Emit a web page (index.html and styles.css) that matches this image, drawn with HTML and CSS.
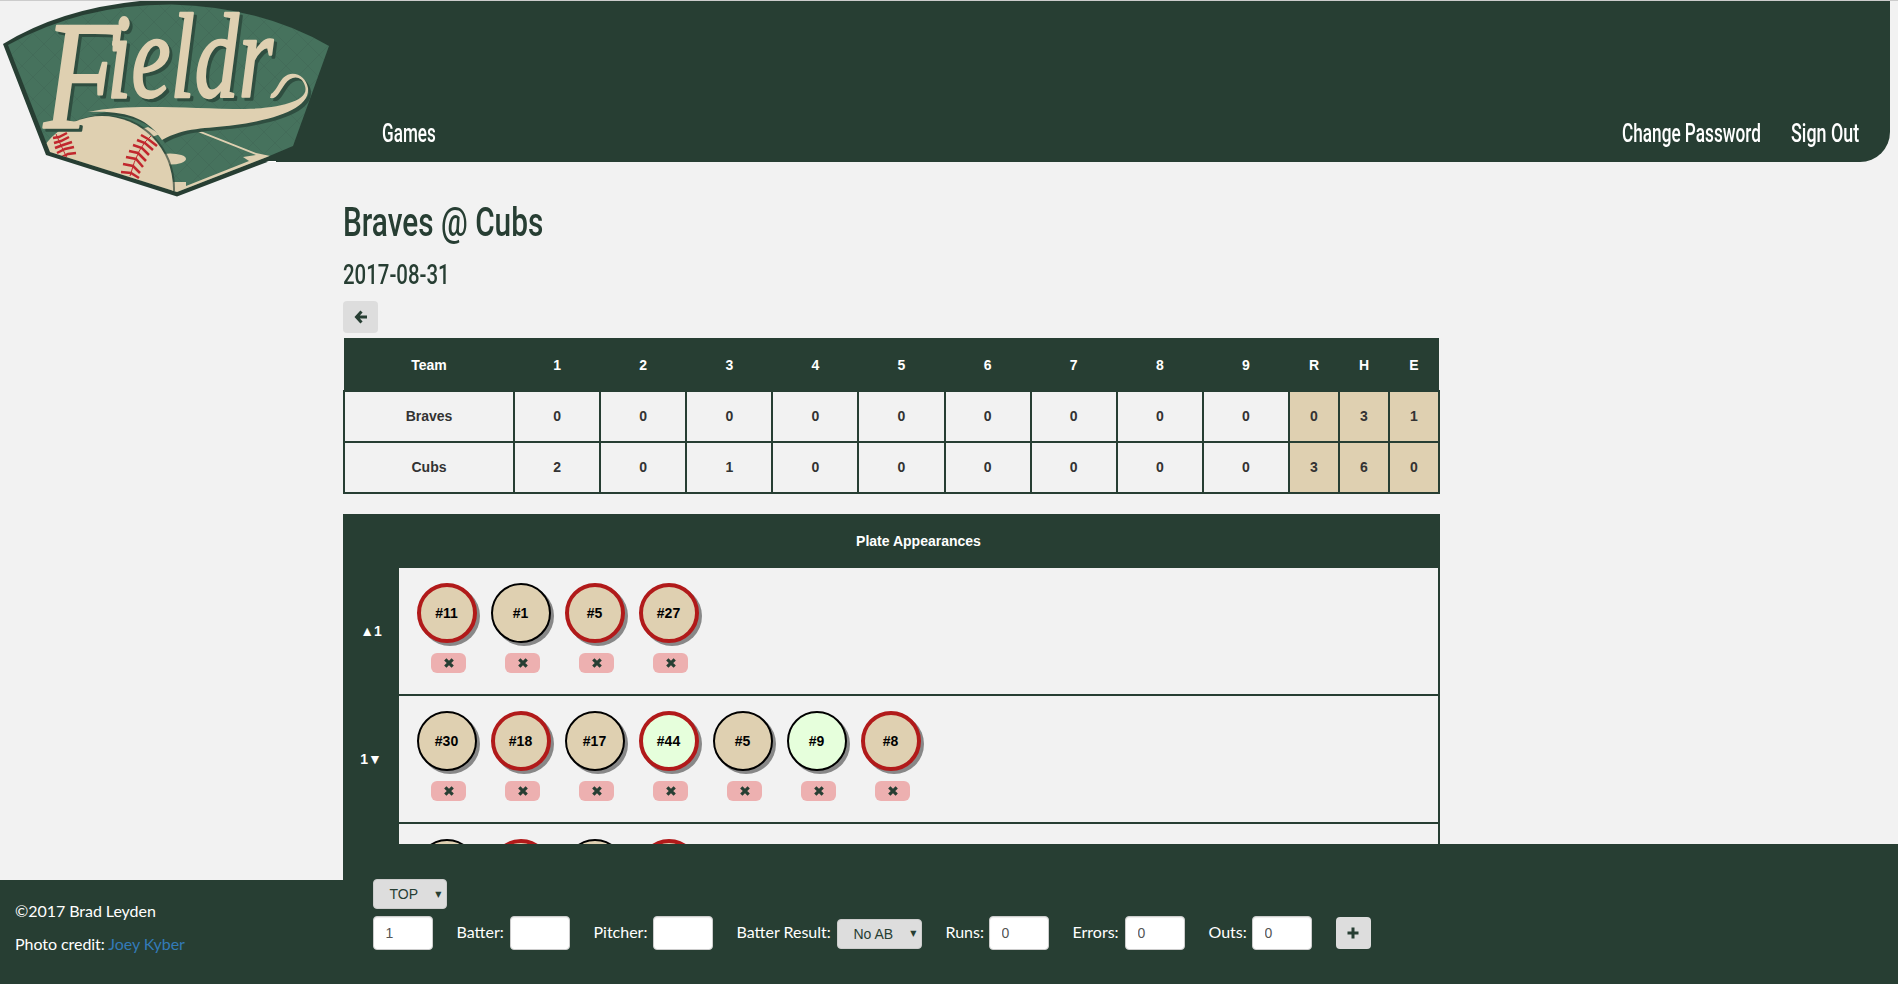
FILE: index.html
```html
<!DOCTYPE html>
<html lang="en">
<head>
<meta charset="utf-8">
<title>Fieldr</title>
<link rel="stylesheet" href="styles.css">
</head>
<body>
<header class="top">
  <nav class="bar">
    <a class="link games"><span>Games</span></a>
    <a class="link password"><span>Change Password</span></a>
    <a class="link signout"><span>Sign Out</span></a>
  </nav>
  <svg class="logo" width="340" height="200" viewBox="0 0 340 200" role="img" aria-label="Fieldr">
    <defs>
      <clipPath id="plate"><path d="M8 45Q82 4 172 4.500Q262 7 329 46L293 146L267 157L177 192L50 152Z"/></clipPath>
      <pattern id="grain" width="22" height="22" patternUnits="userSpaceOnUse"><path d="M0 0L22 22M22 0L0 22" stroke="#36584a" stroke-width=".7" opacity=".35"/></pattern>
    </defs>
    <path d="M140 1H340V161H270L177 196.500L46 155L3 44Q60 9 140 1Z" fill="#273e33"/>
    <path d="M266 162H276V161H269Z" fill="#fff"/>
    <g clip-path="url(#plate)">
      <path d="M0 0H340V200H0Z" fill="#46725d"/>
      <path d="M0 0H340V200H0Z" fill="url(#grain)"/>
      <path d="M193 130L256 155L243 157L249 161L186 186V182H172V196H190L275 157L256 153L198 130Z" fill="#dfd0b1"/>
      <ellipse cx="170" cy="159" rx="16" ry="5.500" fill="#dfd0b1"/>
      <path d="M142 129L148 127L160 134L152 137Z" fill="#dfd0b1"/>
      <ellipse cx="104" cy="188" rx="71" ry="73" fill="#273e33" opacity=".65"/>
      <ellipse cx="102" cy="188" rx="71" ry="72" fill="#dfd0b1"/>
      <g fill="none" stroke="#c1272d" stroke-width="2.500">
        <path d="M56 134Q60 144 67 158" stroke-width="1"/>
        <path d="M151 136Q138 146 130 176" stroke-width="1"/>
        <path d="M53 138L59 137L67 133M54 143L61 141L69 137M55 148L63 145L72 142M57 153L65 149L74 147M60 158L68 154L76 153"/>
        <path d="M141 135L148 139L157 146M137 140L145 143L153 150M133 145L142 148L149 155M129 151L138 153L146 161M126 157L136 159L143 167M123 164L133 166L140 173M121 172L131 173L139 178"/>
      </g>
    </g>
    <g class="lettering">
      <path d="M88 112C130 103 190 109 245 109C280 108 310 101 305 86C302 75 291 75 285 84C278 94 277 99 270 98L271 94C276 91 278 84 283 78C292 69 306 75 308 88C310 108 278 119 235 125C205 129 185 127 162 140C148 118 125 110 88 112Z"/>
      <text><tspan class="cap" x="44" y="128" textLength="76" lengthAdjust="spacingAndGlyphs">F</tspan><tspan class="rest" x="107" y="97" textLength="166" lengthAdjust="spacingAndGlyphs">ieldr</tspan></text>
    </g>
  </svg>
</header>

<main class="content">
  <h1><span>Braves @ Cubs</span></h1>
  <h2><span>2017-08-31</span></h2>
  <button class="btn back" aria-label="Back"><svg width="14" height="14" viewBox="0 0 14 14"><path d="M7.500 1.500L2.500 7L7.500 12.500M3 7H13" fill="none" stroke="#273e33" stroke-width="3"/></svg></button>

  <table class="score">
    <colgroup><col class="team"><col span="9" class="inning"><col span="3" class="total"></colgroup>
    <thead><tr><th>Team</th><th>1</th><th>2</th><th>3</th><th>4</th><th>5</th><th>6</th><th>7</th><th>8</th><th>9</th><th>R</th><th>H</th><th>E</th></tr></thead>
    <tbody>
      <tr><td>Braves</td><td>0</td><td>0</td><td>0</td><td>0</td><td>0</td><td>0</td><td>0</td><td>0</td><td>0</td><td class="tan">0</td><td class="tan">3</td><td class="tan">1</td></tr>
      <tr><td>Cubs</td><td>2</td><td>0</td><td>1</td><td>0</td><td>0</td><td>0</td><td>0</td><td>0</td><td>0</td><td class="tan">3</td><td class="tan">6</td><td class="tan">0</td></tr>
    </tbody>
  </table>

  <section class="plates">
    <div class="plates-head">Plate Appearances</div>
    <div class="half"><div class="label">▲1</div><div class="list" data-list="11r 1 5r 27r"></div></div>
    <div class="half"><div class="label">1▼</div><div class="list" data-list="30 18r 17 44rg 5 9g 8r"></div></div>
    <div class="half"><div class="label"></div><div class="list" data-list="- -r - -r"></div></div>
  </section>
</main>

<footer class="foot">
  <div class="credits">
    <p>©2017 Brad Leyden</p>
    <p>Photo credit: <a>Joey Kyber</a></p>
  </div>
  <form class="entry">
    <button type="button" class="pick">TOP<i>▼</i></button>
    <div class="fields">
      <input value="1" aria-label="Inning">
      <label class="f-batter"><span>Batter:</span><input></label>
      <label class="f-pitcher"><span>Pitcher:</span><input></label>
      <label class="f-result"><span>Batter Result:</span><button type="button" class="pick wide">No AB<i>▼</i></button></label>
      <label class="f-runs"><span>Runs:</span><input value="0"></label>
      <label class="f-errors"><span>Errors:</span><input value="0"></label>
      <label class="f-outs"><span>Outs:</span><input value="0"></label>
      <button type="button" class="btn add" aria-label="Add"><svg width="12" height="12" viewBox="0 0 12 12"><path d="M6 .5V11.500M.5 6H11.500" stroke="#273e33" stroke-width="3"/></svg></button>
    </div>
  </form>
</footer>
<script src="app.js"></script>
</body>
</html>
```

FILE: styles.css
```css
* { box-sizing: border-box; }
html, body { height: 100%; }
body {
  margin: 0;
  overflow: hidden;
  background: #f2f2f2;
  border-top: 1px solid #ccc;
  color: #333;
  font: 14px "Liberation Sans", Arial, sans-serif;
}

/* header */
.top { position: relative; height: 161px; padding: 0 8px 0 276px; }
.bar {
  height: 161px;
  display: flex;
  align-items: flex-end;
  padding: 0 31px 12px 106px;
  background: #273e33;
  border-radius: 0 0 30px 0;
}
.link { color: #fff; font: 500 25px/32px Roboto, sans-serif; white-space: nowrap; }
.link span, h1 span, h2 span { display: inline-block; transform-origin: 0 50%; white-space: nowrap; }
.games { width: 53px; margin-right: auto; }
.games span { transform: scaleX(.685); }
.password { width: 139px; margin-right: 30px; }
.password span { transform: scaleX(.688); }
.signout { width: 68px; }
.signout span { transform: scaleX(.715); }
.logo { position: absolute; left: 0; top: -1px; }
.lettering { fill: #dfd0b1; filter: drop-shadow(3px 3px 0 #2f4e40); }
.lettering text { stroke: #dfd0b1; stroke-width: 2.5px; stroke-linejoin: round; font-family: "Liberation Serif", serif; font-style: italic; }
.cap { font-size: 155px; }
.rest { font-size: 120px; }

/* game */
.content { width: 1097px; margin-left: 343px; color: #273e33; }
h1 { margin: 0; padding: 33px 0 0 0; font: 500 41px/54px Roboto, sans-serif; }
h1 span { transform: scaleX(.727); }
h2 { margin: 0; padding: 8px 0 0 0; font: 500 27.5px/36px Roboto, sans-serif; }
h2 span { transform: scaleX(.742); }
.btn {
  display: flex;
  align-items: center;
  justify-content: center;
  padding: 0;
  width: 35px;
  height: 32px;
  border: 0;
  border-radius: 4px;
  background: #ddd;
}
.back { margin: 8px 0 5px 0; }

.score {
  width: 1097px;
  table-layout: fixed;
  border-collapse: collapse;
  font-weight: bold;
  text-align: center;
}
.team { width: 170px; }
.total { width: 50px; }
.score th { height: 53px; padding: 1px 0 0; background: #273e33; color: #fff; }
.score td { height: 51px; padding: 0 0 1px; border: 2px solid #273e33; color: #333; }
.score .tan { background: #dfd0b1; }

.plates { margin-top: 20px; background: #273e33; color: #fff; font-weight: bold; padding-right: 2px; }
.plates-head { height: 54px; padding-left: 56px; line-height: 54px; text-align: center; }
.half { display: flex; height: 126px; margin-bottom: 2px; }
.label { width: 56px; line-height: 126px; text-align: center; }
.list { flex: 1; display: flex; gap: 14px; padding: 15px 0 0 17.5px; background: #f2f2f2; }
.at-bat { width: 60px; }
.disc {
  display: block;
  height: 60px;
  border: 2px solid #000;
  border-radius: 50%;
  background: #dfd0b1;
  box-shadow: 3px 3px 0 #888;
  color: #000;
  line-height: 57px;
  text-align: center;
}
.disc.hit { background: #e6ffdc; }
.disc.out { border: 4px solid #b11a1a; line-height: 53px; }
.del {
  display: flex;
  align-items: center;
  justify-content: center;
  width: 35px;
  height: 20px;
  margin: 10px 0 0 14.5px;
  border-radius: 6px;
  background: #edb0b0;
}

/* footer */
.foot { position: fixed; left: 0; right: 0; bottom: 0; display: flex; align-items: flex-end; color: #fff; font: 16px Lato, sans-serif; }
.credits { width: 343px; height: 104px; padding: 19px 0 0 15px; background: #273e33; }
.credits p { margin: 0 0 9px; line-height: 24px; letter-spacing: -.05px; }
.credits a { color: #337ab7; }
.entry { flex: 1; height: 140px; padding: 35px 0 0 29.5px; background: #273e33; }
.fields { display: flex; align-items: center; height: 34px; margin-top: 7px; }
.fields input {
  width: 60px;
  height: 34px;
  padding: 0 12px;
  border: 1px solid #ccc;
  border-radius: 4px;
  background: #fff;
  box-shadow: inset 0 1px 1px rgba(0, 0, 0, .075);
  color: #555;
  font: 14px "Liberation Sans", Arial, sans-serif;
}
.fields label { display: flex; align-items: center; justify-content: space-between; margin-left: 24px; white-space: nowrap; }
.fields label span { padding-bottom: 3px; }
.f-batter { width: 113px; }
.f-pitcher { width: 119px; }
.f-result { width: 185px; }
.f-runs { width: 103px; }
.f-errors { width: 112px; }
.f-outs { width: 103px; }
.pick {
  display: flex;
  align-items: center;
  justify-content: space-between;
  width: 74px;
  height: 30px;
  padding: 0 4px 0 16px;
  border: 1px solid #ccc;
  border-radius: 4px;
  background: #ddd;
  color: #273e33;
  font: 14px "Liberation Sans", Arial, sans-serif;
}
.pick i { font: 8px "DejaVu Sans", sans-serif; }
.pick.wide { width: 85px; margin-top: 1px; padding-left: 16px; }
.add { width: 35px; margin-left: 24px; }
```

FILE: app.js
```js
// Entries: jersey number, then r for a red ring and g for a green disc.
document.querySelectorAll('.list').forEach(function (list) {
  list.dataset.list.split(' ').forEach(function (entry) {
    var number = entry.replace(/[rg-]/g, '');
    var item = document.createElement('div');
    item.className = 'at-bat';
    item.innerHTML =
      '<span class="disc' + (/r/.test(entry) ? ' out' : '') + (/g/.test(entry) ? ' hit' : '') + '">' +
      (number ? '#' + number : '') + '</span>' +
      '<span class="del"><svg width="10" height="10" viewBox="0 0 10 10">' +
      '<path d="M1.300 1.300L8.700 8.700M8.700 1.300L1.300 8.700" stroke="#273e33" stroke-width="3.200"/></svg></span>';
    list.appendChild(item);
  });
});
```
